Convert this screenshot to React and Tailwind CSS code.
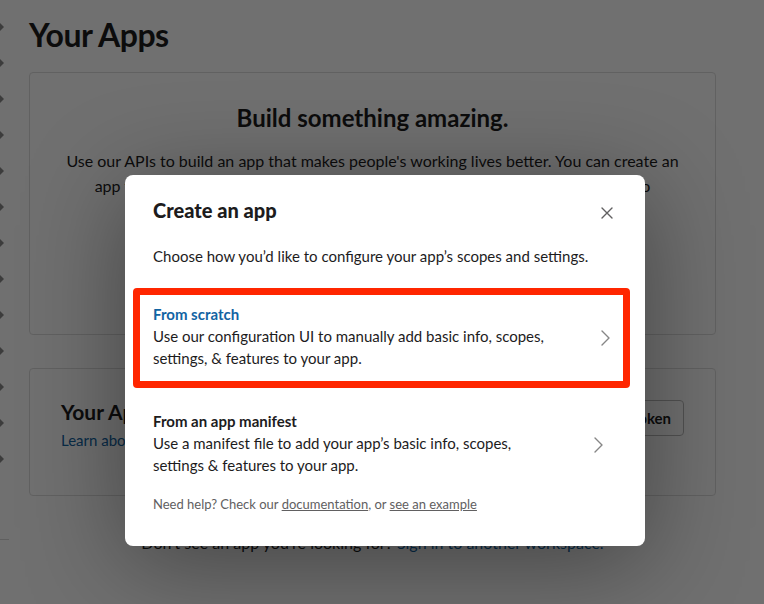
import React from 'react';

const SIDEBAR_ARROWS = Array.from({ length: 13 });

function CloseIcon() {
  return (
    <svg width="12" height="12" viewBox="0 0 12 12" fill="none">
      <path d="M1 1L11 11M11 1L1 11" stroke="#616061" strokeWidth="1.4" strokeLinecap="round" />
    </svg>
  );
}

function Chevron() {
  return (
    <svg width="9" height="16" viewBox="0 0 9 16" fill="none">
      <path d="M1 1L8 8L1 15" stroke="#868686" strokeWidth="1.4" strokeLinecap="round" strokeLinejoin="round" />
    </svg>
  );
}

function Option({ title, titleClass, lines }) {
  return (
    <div className="w-[400px]">
      <div className={`text-[15px] leading-[22px] font-bold ${titleClass}`}>{title}</div>
      <div className="text-[15px] leading-[22px] text-[#1d1c1d]">{lines}</div>
    </div>
  );
}

export default function App() {
  return (
    <div className="relative w-[764px] h-[604px] overflow-hidden bg-white font-['Lato','Noto_Sans',sans-serif] text-[#1d1c1d]">
      {/* page under the overlay */}
      <div className="flex">
        <div className="w-[4px] shrink-0 flex flex-col pt-[9px]">
          {SIDEBAR_ARROWS.map((_, i) => (
            <div key={i} className="h-[36px] flex items-center">
              <div className="w-0 h-0 border-y-[4px] border-y-transparent border-l-[4px] border-l-[#8a8a8a]" />
            </div>
          ))}
          <div className="mt-[62px] h-px w-[9px] bg-[#d8d8d8]" />
        </div>

        <div className="pl-[25px] w-[712px] pt-[16px]">
          <h1 className="text-[32px] leading-[1.2] font-bold tracking-[-0.5px]">Your Apps</h1>

          <div className="mt-[18px] h-[263px] border border-[#dddddd] rounded-[4px] px-[28px] pt-[31px] text-center">
            <h2 className="text-[24px] leading-[1.2] font-bold">Build something amazing.</h2>
            <p className="mt-[15px] text-[16px] leading-[25px]">
              Use our APIs to build an app that makes people's working lives better. You can create an
              <br />
              app that's just for your workspace or create a public Slack App to distribute it to
              <br />
              other workspaces, where anyone on Slack can discover it.
            </p>
          </div>

          <div className="mt-[33px] h-[128px] border border-[#dddddd] rounded-[4px] px-[31px] pt-[30px] flex items-start justify-between">
            <div>
              <div className="text-[21px] leading-[1.2] font-bold">Your App Configuration Tokens</div>
              <div className="mt-[4px] text-[15px] leading-[22px] text-[#1264a3]">Learn about tokens</div>
            </div>
            <button className="mt-px h-[36px] px-[12px] border border-[#bbbbbb] rounded-[4px] text-[15px] font-bold">
              Generate Token
            </button>
          </div>

          <p className="mt-[36px] text-center text-[16px] leading-[22px]">
            Don't see an app you're looking for? <span className="text-[#1264a3]">Sign in to another workspace.</span>
          </p>
        </div>
      </div>

      {/* dim overlay */}
      <div className="absolute inset-0 bg-black/[0.56]" />

      {/* modal */}
      <div className="absolute left-[125px] top-[175px] w-[520px] h-[371px] bg-white rounded-[8px] shadow-[0_16px_100px_rgba(0,0,0,0.4)]">
        <div className="pt-[23px] pl-[28px] pr-[32px] flex items-start justify-between">
          <h3 className="text-[20px] leading-[1.2] font-black">Create an app</h3>
          <div className="mt-[9px]">
            <CloseIcon />
          </div>
        </div>

        <p className="mt-[23px] px-[28px] text-[15px] leading-[22px]">
          Choose how you’d like to configure your app’s scopes and settings.
        </p>

        <div className="mt-[21px] ml-[8px] w-[497px] border-[7px] border-[#ff2600] rounded-[4px] pl-[13px] pr-[13px] pt-[8px] pb-[12px] flex items-center justify-between">
          <Option
            title="From scratch"
            titleClass="text-[#1264a3]"
            lines={<>Use our configuration UI to manually add basic info, scopes, settings, &amp; features to your app.</>}
          />
          <div className="mt-[3px]">
            <Chevron />
          </div>
        </div>

        <div className="mt-[22px] pl-[28px] pr-[42px] flex items-center justify-between">
          <Option
            title="From an app manifest"
            titleClass="text-[#1d1c1d]"
            lines={<>Use a manifest file to add your app’s basic info, scopes, settings &amp; features to your app.</>}
          />
          <div className="mt-[3px]">
            <Chevron />
          </div>
        </div>

        <p className="mt-[19px] px-[28px] text-[13px] leading-[18px] text-[#616061]">
          Need help? Check our <span className="underline">documentation</span>, or <span className="underline">see an example</span>
        </p>
      </div>
    </div>
  );
}
